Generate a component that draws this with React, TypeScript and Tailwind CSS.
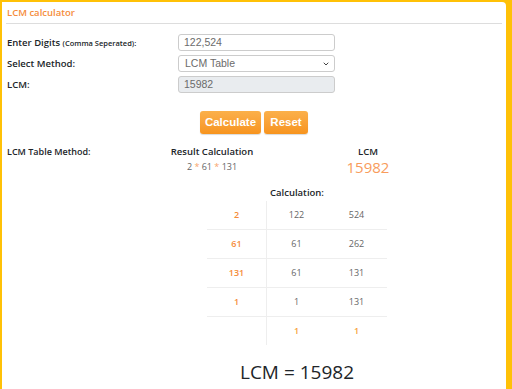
import { ChevronDown } from 'lucide-react';

const rows = [
  { d: '2', a: '122', b: '524' },
  { d: '61', a: '61', b: '262' },
  { d: '131', a: '61', b: '131' },
  { d: '1', a: '1', b: '131' },
];

const field =
  "w-[157px] h-[17px] shrink-0 border border-[#cccccc] rounded-[3px] px-[5px] flex items-center text-[10.5px] text-[#6b6b6b] font-['Liberation_Sans',sans-serif]";

const App = () => {
  return (
    <div className="w-[512px] h-[389px] overflow-hidden bg-[#ffc107] pt-[2px] pl-[2px] pr-[6px] font-['Open_Sans',sans-serif]">
      <div className="bg-white h-full rounded-tr-[4px] text-[#212529]">
        <div className="mx-[4px] h-[22px] border-b border-[#dddddd] flex items-center pl-[1px]">
          <h1 className="text-[9.5px] font-semibold text-[#f58c3a] leading-none">LCM calculator</h1>
        </div>

        <div className="flex flex-col gap-[4px] mt-[10px] pl-[5px]">
          <div className="flex items-center h-[17px]">
            <p className="w-[171px] text-[9.5px] font-semibold leading-none">
              Enter Digits <span className="text-[7.5px]">(Comma Seperated):</span>
            </p>
            <div className={`${field} bg-white`}>122,524</div>
          </div>
          <div className="flex items-center h-[17px]">
            <p className="w-[171px] text-[9.5px] font-semibold leading-none">Select Method:</p>
            <div className={`${field} bg-white justify-between`}>
              <span className="pl-[1px]">LCM Table</span>
              <ChevronDown className="w-[8px] h-[8px] text-[#444] -mr-[1px]" strokeWidth={3} />
            </div>
          </div>
          <div className="flex items-center h-[17px]">
            <p className="w-[171px] text-[9.5px] font-semibold leading-none">LCM:</p>
            <div className={`${field} bg-[#e9ecef]`}>15982</div>
          </div>
        </div>

        <div className="flex gap-[3px] mt-[18px] ml-[198px]">
          <button className="w-[61px] h-[23px] rounded-[3px] bg-gradient-to-b from-[#fbb04a] to-[#f7941d] text-white text-[11.5px] font-bold font-['Liberation_Sans',sans-serif] shadow-[0_1px_1px_rgba(0,0,0,0.15)]">
            Calculate
          </button>
          <button className="w-[44px] h-[23px] rounded-[3px] bg-gradient-to-b from-[#fbb04a] to-[#f7941d] text-white text-[11.5px] font-bold font-['Liberation_Sans',sans-serif] shadow-[0_1px_1px_rgba(0,0,0,0.15)]">
            Reset
          </button>
        </div>

        <div className="flex mt-[12px] pl-[5px]">
          <p className="w-[150px] text-[9px] font-semibold leading-none pt-[1px]">LCM Table Method:</p>
          <div className="w-[110px] flex flex-col items-center">
            <p className="text-[9.5px] font-semibold leading-none pt-[1px]">Result Calculation</p>
            <p className="text-[9px] text-[#666] mt-[5px] leading-none">
              2 <span className="text-[#f7a46a]">*</span> 61 <span className="text-[#f7a46a]">*</span> 131
            </p>
          </div>
          <div className="w-[202px] flex flex-col items-center">
            <p className="text-[9.5px] font-semibold leading-none pt-[1px]">LCM</p>
            <p className="text-[15px] text-[#f89c5c] leading-none mt-[3px]">15982</p>
          </div>
        </div>

        <p className="w-[180px] ml-[205px] text-center text-[9.5px] font-semibold mt-[13px] leading-none">Calculation:</p>

        <div className="w-[180px] ml-[205px] mt-[4px]">
          {rows.map((r) => (
            <div key={r.d} className="grid grid-cols-[59px_60px_61px] h-[29px] border-b border-[#eeeeee] text-[9px] items-center text-center">
              <span className="text-[#f58c3a] font-semibold">{r.d}</span>
              <span className="text-[#666] h-full flex items-center justify-center border-l border-[#eeeeee]">{r.a}</span>
              <span className="text-[#666]">{r.b}</span>
            </div>
          ))}
          <div className="grid grid-cols-[59px_60px_61px] h-[28px] text-[9px] items-center text-center">
            <span></span>
            <span className="text-[#f7a23a] font-semibold h-full flex items-center justify-center border-l border-[#eeeeee]">1</span>
            <span className="text-[#f7a23a] font-semibold">1</span>
          </div>
        </div>

        <p className="w-[180px] ml-[205px] text-center text-[19px] mt-[18px] leading-none text-[#212529]">LCM = 15982</p>
      </div>
    </div>
  );
};

export default App;
